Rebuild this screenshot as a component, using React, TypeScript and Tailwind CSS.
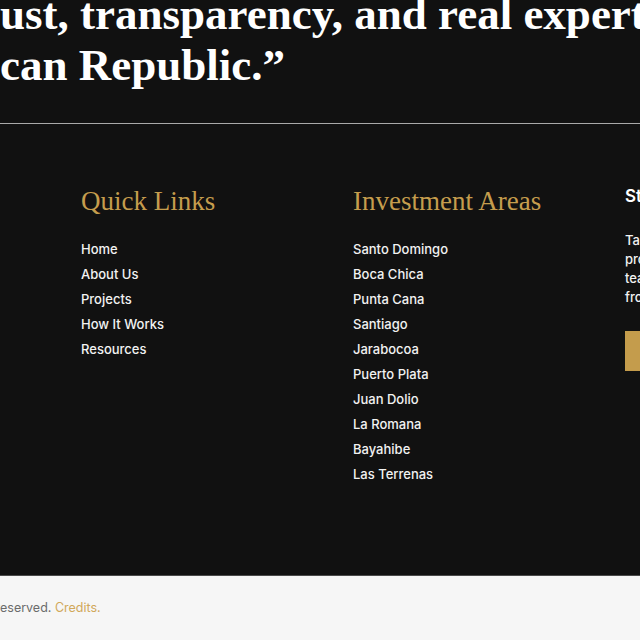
import React from "react";

const serif = { fontFamily: '"Liberation Serif", "DejaVu Serif", serif' };
const sans = { fontFamily: 'Inter, "Noto Sans", sans-serif' };

const quickLinks = ["Home", "About Us", "Projects", "How It Works", "Resources"];
const areas = [
  "Santo Domingo",
  "Boca Chica",
  "Punta Cana",
  "Santiago",
  "Jarabocoa",
  "Puerto Plata",
  "Juan Dolio",
  "La Romana",
  "Bayahibe",
  "Las Terrenas",
];

function LinkList({ items }: { items: string[] }) {
  return (
    <ul className="flex flex-col gap-[5px] text-[13px] leading-5 font-medium text-[#f2f2f2]">
      {items.map((item) => (
        <li key={item}>
          <a href="#" className="hover:text-[#c89e4c]">
            {item}
          </a>
        </li>
      ))}
    </ul>
  );
}

export default function App() {
  return (
    <div className="w-[640px] h-[640px] overflow-hidden bg-[#111111] flex flex-col" style={sans}>
      {/* testimonial quote, trailing lines */}
      <section className="shrink-0 pb-[32px] border-b border-[#a9a9a9]">
        <blockquote
          className="mt-[-11px] text-[45px] leading-[51px] font-bold text-white whitespace-nowrap"
          style={serif}
        >
          <div className="flex">
            <div className="w-0 flex justify-end">
              <span>“Investing with them felt secure because everything was built on tr</span>
            </div>
            <span>ust, transparency, and real expertise in the</span>
          </div>
          <div className="flex">
            <div className="w-0 flex justify-end">
              <span>Domini</span>
            </div>
            <span>can Republic.”</span>
          </div>
        </blockquote>
      </section>

      {/* footer columns */}
      <footer className="flex-1 flex pl-[81px] pt-[60px]">
        <div className="w-[272px] shrink-0">
          <h3 className="text-[27px] leading-[34px] text-[#c59d4d]" style={serif}>
            Quick Links
          </h3>
          <div className="mt-[21px]">
            <LinkList items={quickLinks} />
          </div>
        </div>
        <div className="w-[272px] shrink-0">
          <h3 className="text-[27px] leading-[34px] text-[#c59d4d]" style={serif}>
            Investment Areas
          </h3>
          <div className="mt-[21px]">
            <LinkList items={areas} />
          </div>
        </div>
        <div className="w-[260px] shrink-0">
          <h4 className="text-[17px] leading-6 font-semibold text-white">Start Your Investment</h4>
          <p className="mt-[23px] text-[13px] leading-[19px] font-medium text-[#f2f2f2]">
            Talk to our team about current
            <br />
            projects and opportunities. Our
            <br />
            team will guide you through every step
            <br />
            from start to finish.
          </p>
          <button className="mt-[24px] h-[40px] px-6 bg-[#c49c4c] text-[#111] text-[13px] font-semibold">
            Contact Us
          </button>
        </div>
      </footer>

      {/* copyright bar */}
      <div className="shrink-0 h-[65px] bg-[#f6f6f6] border-t border-[#4a4a4a] flex items-center">
        <div className="flex whitespace-nowrap text-[12.5px] text-[#6b6b6b] mt-[1px]">
          <div className="w-0 flex justify-end">
            <span>© 2025 DR Real Estate Investments. All rights r</span>
          </div>
          <span>
            eserved. <a href="#" className="text-[#d1a85a]">Credits.</a>
          </span>
        </div>
      </div>
    </div>
  );
}
